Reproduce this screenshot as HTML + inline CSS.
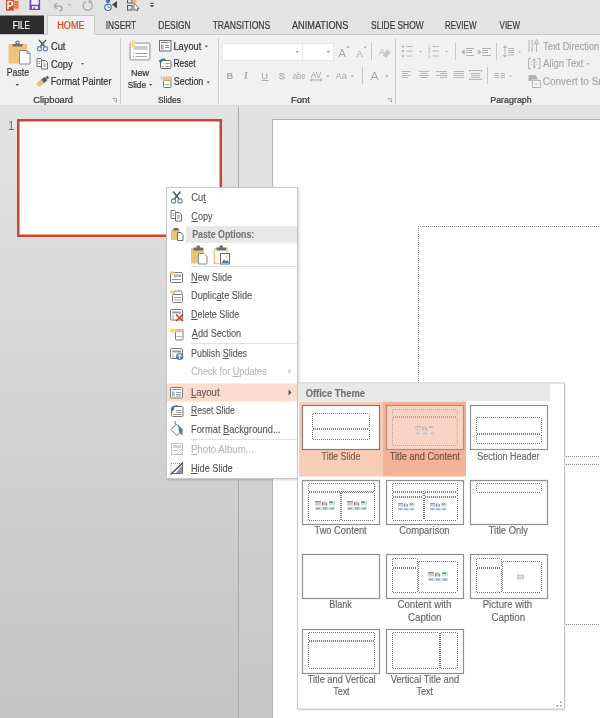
<!DOCTYPE html>
<html><head><meta charset="utf-8">
<style>
*{margin:0;padding:0}
html,body{width:600px;height:718px;overflow:hidden;background:#fff}
svg{position:absolute;left:0;top:0;font-family:"Liberation Sans",sans-serif;will-change:transform}
</style></head><body>
<svg width="600" height="718" viewBox="0 0 600 718">
<defs>
<linearGradient id="gl" x1="0" y1="0" x2="0" y2="1"><stop offset="0" stop-color="#e3e3e3"/><stop offset="1" stop-color="#c4c4c4"/></linearGradient>
<linearGradient id="gr" x1="0" y1="0" x2="0" y2="1"><stop offset="0" stop-color="#e3e3e3"/><stop offset="1" stop-color="#c6c6c6"/></linearGradient>
<filter id="sh" x="-10%" y="-10%" width="120%" height="120%"><feGaussianBlur stdDeviation="1.2"/></filter>
</defs>
<!-- top bar -->
<rect x="0" y="0" width="600" height="35" fill="#e3e3e3"/>
<rect x="0" y="34" width="600" height="1" fill="#c6c6c6"/>
<rect x="0" y="15.5" width="44" height="18.5" fill="#2d2d2d"/>
<path d="M47.5 35 V15.5 H94.5 V35" fill="#f1f1f1" stroke="#c6c6c6" stroke-width="1"/>
<!-- ribbon body -->
<rect x="0" y="35" width="600" height="70.5" fill="#f1f1f1"/>
<rect x="47.5" y="34" width="47" height="2" fill="#f1f1f1"/>
<rect x="0" y="105.5" width="600" height="1" fill="#c6c6c6"/>
<!-- group separators -->
<rect x="120" y="38" width="1" height="66" fill="#cfcfcf"/>
<rect x="218" y="38" width="1" height="66" fill="#cfcfcf"/>
<rect x="395" y="38" width="1" height="66" fill="#cfcfcf"/>
<!-- lower area -->
<rect x="0" y="106.5" width="238" height="611.5" fill="url(#gl)"/>
<rect x="238" y="106.5" width="1" height="611.5" fill="#ababab"/>
<rect x="239" y="106.5" width="361" height="611.5" fill="url(#gr)"/>
<!-- slide -->
<rect x="272.5" y="119.5" width="400" height="700" fill="#fff" stroke="#b4b4b4"/>
<path d="M418.5 226 V700" stroke="#8a8a8a" stroke-width="1" stroke-dasharray="1 1" fill="none"/>
<path d="M418 226.5 H600 M418 456.5 H600 M418 464.5 H600 M418 624.5 H600" stroke="#8a8a8a" stroke-width="1" stroke-dasharray="1 1" fill="none"/>
<!-- thumbnail -->
<rect x="18.25" y="120.25" width="202.5" height="115.5" fill="#fff" stroke="#c9472b" stroke-width="2.5"/>
<text x="7.8" y="129.6" font-size="12.2" fill="#c8563a">1</text>
<!-- context menu -->
<rect x="167" y="188" width="132" height="292" fill="#000" opacity=".18" filter="url(#sh)"/>
<rect x="166.5" y="187.5" width="131" height="291" fill="#fff" stroke="#c6c6c6"/>
<rect x="186" y="226" width="111" height="17" fill="#e8e8e8"/>
<rect x="191" y="266" width="106" height="1" fill="#e2e2e2"/>
<rect x="191" y="343" width="106" height="1" fill="#e2e2e2"/>
<rect x="191" y="439" width="106" height="1" fill="#e2e2e2"/>
<rect x="167" y="383.5" width="130" height="18" fill="#fcdccf"/>
<!-- submenu -->
<rect x="298" y="384" width="267" height="326" fill="#000" opacity=".18" filter="url(#sh)"/>
<rect x="297.5" y="383" width="267" height="326" fill="#fff" stroke="#c6c6c6"/>
<rect x="298" y="384" width="252" height="17" fill="#e8e8e8"/>
<rect x="299" y="401.5" width="83.5" height="75" fill="#f9ccb7"/>
<rect x="382.5" y="401.5" width="83.5" height="75" fill="#f4b397"/>
<rect x="302.5" y="405.5" width="77" height="44" fill="#fff" stroke="#857a76" stroke-width="1.2"/>
<path d="M313.0 413.5 H369.0" stroke="#7a7a7a" stroke-width="1" stroke-dasharray="1 1"/><path d="M313.0 428.5 H369.0" stroke="#7a7a7a" stroke-width="1" stroke-dasharray="1 1"/><path d="M312.5 414.0 V428.0" stroke="#7a7a7a" stroke-width="1" stroke-dasharray="1 1"/><path d="M369.5 414.0 V428.0" stroke="#7a7a7a" stroke-width="1" stroke-dasharray="1 1"/><path d="M313.0 429.5 H369.0" stroke="#7a7a7a" stroke-width="1" stroke-dasharray="1 1"/><path d="M313.0 439.5 H369.0" stroke="#7a7a7a" stroke-width="1" stroke-dasharray="1 1"/><path d="M312.5 430.0 V439.0" stroke="#7a7a7a" stroke-width="1" stroke-dasharray="1 1"/><path d="M369.5 430.0 V439.0" stroke="#7a7a7a" stroke-width="1" stroke-dasharray="1 1"/>
<rect x="386.5" y="405.5" width="77" height="44" fill="#f8d4c4" stroke="#b58a7a" stroke-width="1.2"/>
<path d="M393.0 409.5 H457.0" stroke="#c09a8c" stroke-width="1" stroke-dasharray="1 1"/><path d="M393.0 416.5 H457.0" stroke="#c09a8c" stroke-width="1" stroke-dasharray="1 1"/><path d="M392.5 410.0 V416.0" stroke="#c09a8c" stroke-width="1" stroke-dasharray="1 1"/><path d="M457.5 410.0 V416.0" stroke="#c09a8c" stroke-width="1" stroke-dasharray="1 1"/><path d="M393.0 417.5 H457.0" stroke="#c09a8c" stroke-width="1" stroke-dasharray="1 1"/><path d="M393.0 445.5 H457.0" stroke="#c09a8c" stroke-width="1" stroke-dasharray="1 1"/><path d="M392.5 418.0 V445.0" stroke="#c09a8c" stroke-width="1" stroke-dasharray="1 1"/><path d="M457.5 418.0 V445.0" stroke="#c09a8c" stroke-width="1" stroke-dasharray="1 1"/>
<g opacity=".5" style="filter:grayscale(1)"><g transform="translate(415.0 426.0) scale(1.00)"><rect x="0" y="0" width="6" height="4.5" fill="#c8cdd4"/><rect x="0" y="0" width="6" height="1.2" fill="#8e949c"/><rect x="7" y="1" width="1.6" height="3.5" fill="#6f8fc9"/><rect x="8.8" y="0" width="1.6" height="4.5" fill="#e6c65a"/><rect x="10.6" y="1.5" width="1.6" height="3" fill="#8a8a8a"/><rect x="14" y="0" width="6" height="4.5" fill="#cfe3d6"/><rect x="14" y="0.5" width="4" height="1.5" fill="#5aa07a"/><rect x="0" y="6" width="20" height="3" fill="#d6e2ee"/><rect x="1" y="6.5" width="4" height="2" fill="#8fb0d0"/><rect x="8" y="6.5" width="4" height="2" fill="#8fb0d0"/><rect x="15" y="6.5" width="4" height="2" fill="#8fb0d0"/></g></g>
<rect x="470.5" y="405.5" width="77" height="44" fill="#fff" stroke="#8d9096" stroke-width="1.2"/>
<path d="M477.0 417.5 H541.0" stroke="#7a7a7a" stroke-width="1" stroke-dasharray="1 1"/><path d="M477.0 433.5 H541.0" stroke="#7a7a7a" stroke-width="1" stroke-dasharray="1 1"/><path d="M476.5 418.0 V433.0" stroke="#7a7a7a" stroke-width="1" stroke-dasharray="1 1"/><path d="M541.5 418.0 V433.0" stroke="#7a7a7a" stroke-width="1" stroke-dasharray="1 1"/><path d="M477.0 434.5 H541.0" stroke="#7a7a7a" stroke-width="1" stroke-dasharray="1 1"/><path d="M477.0 443.5 H541.0" stroke="#7a7a7a" stroke-width="1" stroke-dasharray="1 1"/><path d="M476.5 435.0 V443.0" stroke="#7a7a7a" stroke-width="1" stroke-dasharray="1 1"/><path d="M541.5 435.0 V443.0" stroke="#7a7a7a" stroke-width="1" stroke-dasharray="1 1"/>
<rect x="302.5" y="480.5" width="77" height="44" fill="#fff" stroke="#8d9096" stroke-width="1.2"/>
<path d="M309.0 483.5 H374.0" stroke="#7a7a7a" stroke-width="1" stroke-dasharray="1 1"/><path d="M309.0 491.5 H374.0" stroke="#7a7a7a" stroke-width="1" stroke-dasharray="1 1"/><path d="M308.5 484.0 V491.0" stroke="#7a7a7a" stroke-width="1" stroke-dasharray="1 1"/><path d="M374.5 484.0 V491.0" stroke="#7a7a7a" stroke-width="1" stroke-dasharray="1 1"/><path d="M309.0 492.5 H340.0" stroke="#7a7a7a" stroke-width="1" stroke-dasharray="1 1"/><path d="M309.0 520.5 H340.0" stroke="#7a7a7a" stroke-width="1" stroke-dasharray="1 1"/><path d="M308.5 493.0 V520.0" stroke="#7a7a7a" stroke-width="1" stroke-dasharray="1 1"/><path d="M340.5 493.0 V520.0" stroke="#7a7a7a" stroke-width="1" stroke-dasharray="1 1"/><path d="M342.0 492.5 H374.0" stroke="#7a7a7a" stroke-width="1" stroke-dasharray="1 1"/><path d="M342.0 520.5 H374.0" stroke="#7a7a7a" stroke-width="1" stroke-dasharray="1 1"/><path d="M341.5 493.0 V520.0" stroke="#7a7a7a" stroke-width="1" stroke-dasharray="1 1"/><path d="M374.5 493.0 V520.0" stroke="#7a7a7a" stroke-width="1" stroke-dasharray="1 1"/>
<g transform="translate(315.0 501.0) scale(1.00)"><rect x="0" y="0" width="6" height="4.5" fill="#c8cdd4"/><rect x="0" y="0" width="6" height="1.2" fill="#8e949c"/><rect x="7" y="1" width="1.6" height="3.5" fill="#6f8fc9"/><rect x="8.8" y="0" width="1.6" height="4.5" fill="#e6c65a"/><rect x="10.6" y="1.5" width="1.6" height="3" fill="#8a8a8a"/><rect x="14" y="0" width="6" height="4.5" fill="#cfe3d6"/><rect x="14" y="0.5" width="4" height="1.5" fill="#5aa07a"/><rect x="0" y="6" width="20" height="3" fill="#d6e2ee"/><rect x="1" y="6.5" width="4" height="2" fill="#8fb0d0"/><rect x="8" y="6.5" width="4" height="2" fill="#8fb0d0"/><rect x="15" y="6.5" width="4" height="2" fill="#8fb0d0"/></g>
<g transform="translate(347.0 501.0) scale(1.00)"><rect x="0" y="0" width="6" height="4.5" fill="#c8cdd4"/><rect x="0" y="0" width="6" height="1.2" fill="#8e949c"/><rect x="7" y="1" width="1.6" height="3.5" fill="#6f8fc9"/><rect x="8.8" y="0" width="1.6" height="4.5" fill="#e6c65a"/><rect x="10.6" y="1.5" width="1.6" height="3" fill="#8a8a8a"/><rect x="14" y="0" width="6" height="4.5" fill="#cfe3d6"/><rect x="14" y="0.5" width="4" height="1.5" fill="#5aa07a"/><rect x="0" y="6" width="20" height="3" fill="#d6e2ee"/><rect x="1" y="6.5" width="4" height="2" fill="#8fb0d0"/><rect x="8" y="6.5" width="4" height="2" fill="#8fb0d0"/><rect x="15" y="6.5" width="4" height="2" fill="#8fb0d0"/></g>
<rect x="386.5" y="480.5" width="77" height="44" fill="#fff" stroke="#8d9096" stroke-width="1.2"/>
<path d="M393.0 483.5 H457.0" stroke="#7a7a7a" stroke-width="1" stroke-dasharray="1 1"/><path d="M393.0 491.5 H457.0" stroke="#7a7a7a" stroke-width="1" stroke-dasharray="1 1"/><path d="M392.5 484.0 V491.0" stroke="#7a7a7a" stroke-width="1" stroke-dasharray="1 1"/><path d="M457.5 484.0 V491.0" stroke="#7a7a7a" stroke-width="1" stroke-dasharray="1 1"/><path d="M393.0 492.5 H423.0" stroke="#7a7a7a" stroke-width="1" stroke-dasharray="1 1"/><path d="M393.0 496.5 H423.0" stroke="#7a7a7a" stroke-width="1" stroke-dasharray="1 1"/><path d="M392.5 493.0 V496.0" stroke="#7a7a7a" stroke-width="1" stroke-dasharray="1 1"/><path d="M423.5 493.0 V496.0" stroke="#7a7a7a" stroke-width="1" stroke-dasharray="1 1"/><path d="M425.0 492.5 H457.0" stroke="#7a7a7a" stroke-width="1" stroke-dasharray="1 1"/><path d="M425.0 496.5 H457.0" stroke="#7a7a7a" stroke-width="1" stroke-dasharray="1 1"/><path d="M424.5 493.0 V496.0" stroke="#7a7a7a" stroke-width="1" stroke-dasharray="1 1"/><path d="M457.5 493.0 V496.0" stroke="#7a7a7a" stroke-width="1" stroke-dasharray="1 1"/><path d="M393.0 497.5 H423.0" stroke="#7a7a7a" stroke-width="1" stroke-dasharray="1 1"/><path d="M393.0 520.5 H423.0" stroke="#7a7a7a" stroke-width="1" stroke-dasharray="1 1"/><path d="M392.5 498.0 V520.0" stroke="#7a7a7a" stroke-width="1" stroke-dasharray="1 1"/><path d="M423.5 498.0 V520.0" stroke="#7a7a7a" stroke-width="1" stroke-dasharray="1 1"/><path d="M425.0 497.5 H457.0" stroke="#7a7a7a" stroke-width="1" stroke-dasharray="1 1"/><path d="M425.0 520.5 H457.0" stroke="#7a7a7a" stroke-width="1" stroke-dasharray="1 1"/><path d="M424.5 498.0 V520.0" stroke="#7a7a7a" stroke-width="1" stroke-dasharray="1 1"/><path d="M457.5 498.0 V520.0" stroke="#7a7a7a" stroke-width="1" stroke-dasharray="1 1"/>
<g transform="translate(398.0 503.0) scale(0.82)"><rect x="0" y="0" width="6" height="4.5" fill="#c8cdd4"/><rect x="0" y="0" width="6" height="1.2" fill="#8e949c"/><rect x="7" y="1" width="1.6" height="3.5" fill="#6f8fc9"/><rect x="8.8" y="0" width="1.6" height="4.5" fill="#e6c65a"/><rect x="10.6" y="1.5" width="1.6" height="3" fill="#8a8a8a"/><rect x="14" y="0" width="6" height="4.5" fill="#cfe3d6"/><rect x="14" y="0.5" width="4" height="1.5" fill="#5aa07a"/><rect x="0" y="6" width="20" height="3" fill="#d6e2ee"/><rect x="1" y="6.5" width="4" height="2" fill="#8fb0d0"/><rect x="8" y="6.5" width="4" height="2" fill="#8fb0d0"/><rect x="15" y="6.5" width="4" height="2" fill="#8fb0d0"/></g>
<g transform="translate(430.0 503.0) scale(0.82)"><rect x="0" y="0" width="6" height="4.5" fill="#c8cdd4"/><rect x="0" y="0" width="6" height="1.2" fill="#8e949c"/><rect x="7" y="1" width="1.6" height="3.5" fill="#6f8fc9"/><rect x="8.8" y="0" width="1.6" height="4.5" fill="#e6c65a"/><rect x="10.6" y="1.5" width="1.6" height="3" fill="#8a8a8a"/><rect x="14" y="0" width="6" height="4.5" fill="#cfe3d6"/><rect x="14" y="0.5" width="4" height="1.5" fill="#5aa07a"/><rect x="0" y="6" width="20" height="3" fill="#d6e2ee"/><rect x="1" y="6.5" width="4" height="2" fill="#8fb0d0"/><rect x="8" y="6.5" width="4" height="2" fill="#8fb0d0"/><rect x="15" y="6.5" width="4" height="2" fill="#8fb0d0"/></g>
<rect x="470.5" y="480.5" width="77" height="44" fill="#fff" stroke="#8d9096" stroke-width="1.2"/>
<path d="M477.0 483.5 H541.0" stroke="#7a7a7a" stroke-width="1" stroke-dasharray="1 1"/><path d="M477.0 492.5 H541.0" stroke="#7a7a7a" stroke-width="1" stroke-dasharray="1 1"/><path d="M476.5 484.0 V492.0" stroke="#7a7a7a" stroke-width="1" stroke-dasharray="1 1"/><path d="M541.5 484.0 V492.0" stroke="#7a7a7a" stroke-width="1" stroke-dasharray="1 1"/>
<rect x="302.5" y="554.5" width="77" height="44" fill="#fff" stroke="#8d9096" stroke-width="1.2"/>
<rect x="386.5" y="554.5" width="77" height="44" fill="#fff" stroke="#8d9096" stroke-width="1.2"/>
<path d="M393.0 558.5 H417.0" stroke="#7a7a7a" stroke-width="1" stroke-dasharray="1 1"/><path d="M393.0 567.5 H417.0" stroke="#7a7a7a" stroke-width="1" stroke-dasharray="1 1"/><path d="M392.5 559.0 V567.0" stroke="#7a7a7a" stroke-width="1" stroke-dasharray="1 1"/><path d="M417.5 559.0 V567.0" stroke="#7a7a7a" stroke-width="1" stroke-dasharray="1 1"/><path d="M393.0 568.5 H417.0" stroke="#7a7a7a" stroke-width="1" stroke-dasharray="1 1"/><path d="M393.0 592.5 H417.0" stroke="#7a7a7a" stroke-width="1" stroke-dasharray="1 1"/><path d="M392.5 569.0 V592.0" stroke="#7a7a7a" stroke-width="1" stroke-dasharray="1 1"/><path d="M417.5 569.0 V592.0" stroke="#7a7a7a" stroke-width="1" stroke-dasharray="1 1"/><path d="M419.0 561.5 H457.0" stroke="#7a7a7a" stroke-width="1" stroke-dasharray="1 1"/><path d="M419.0 592.5 H457.0" stroke="#7a7a7a" stroke-width="1" stroke-dasharray="1 1"/><path d="M418.5 562.0 V592.0" stroke="#7a7a7a" stroke-width="1" stroke-dasharray="1 1"/><path d="M457.5 562.0 V592.0" stroke="#7a7a7a" stroke-width="1" stroke-dasharray="1 1"/>
<g transform="translate(428.0 572.0) scale(1.00)"><rect x="0" y="0" width="6" height="4.5" fill="#c8cdd4"/><rect x="0" y="0" width="6" height="1.2" fill="#8e949c"/><rect x="7" y="1" width="1.6" height="3.5" fill="#6f8fc9"/><rect x="8.8" y="0" width="1.6" height="4.5" fill="#e6c65a"/><rect x="10.6" y="1.5" width="1.6" height="3" fill="#8a8a8a"/><rect x="14" y="0" width="6" height="4.5" fill="#cfe3d6"/><rect x="14" y="0.5" width="4" height="1.5" fill="#5aa07a"/><rect x="0" y="6" width="20" height="3" fill="#d6e2ee"/><rect x="1" y="6.5" width="4" height="2" fill="#8fb0d0"/><rect x="8" y="6.5" width="4" height="2" fill="#8fb0d0"/><rect x="15" y="6.5" width="4" height="2" fill="#8fb0d0"/></g>
<rect x="470.5" y="554.5" width="77" height="44" fill="#fff" stroke="#8d9096" stroke-width="1.2"/>
<path d="M477.0 558.5 H501.0" stroke="#7a7a7a" stroke-width="1" stroke-dasharray="1 1"/><path d="M477.0 567.5 H501.0" stroke="#7a7a7a" stroke-width="1" stroke-dasharray="1 1"/><path d="M476.5 559.0 V567.0" stroke="#7a7a7a" stroke-width="1" stroke-dasharray="1 1"/><path d="M501.5 559.0 V567.0" stroke="#7a7a7a" stroke-width="1" stroke-dasharray="1 1"/><path d="M477.0 568.5 H501.0" stroke="#7a7a7a" stroke-width="1" stroke-dasharray="1 1"/><path d="M477.0 592.5 H501.0" stroke="#7a7a7a" stroke-width="1" stroke-dasharray="1 1"/><path d="M476.5 569.0 V592.0" stroke="#7a7a7a" stroke-width="1" stroke-dasharray="1 1"/><path d="M501.5 569.0 V592.0" stroke="#7a7a7a" stroke-width="1" stroke-dasharray="1 1"/><path d="M503.0 561.5 H541.0" stroke="#7a7a7a" stroke-width="1" stroke-dasharray="1 1"/><path d="M503.0 592.5 H541.0" stroke="#7a7a7a" stroke-width="1" stroke-dasharray="1 1"/><path d="M502.5 562.0 V592.0" stroke="#7a7a7a" stroke-width="1" stroke-dasharray="1 1"/><path d="M541.5 562.0 V592.0" stroke="#7a7a7a" stroke-width="1" stroke-dasharray="1 1"/>
<rect x="517.5" y="575.0" width="6" height="4" fill="#d4dde6" stroke="#a9b8c8" stroke-width=".7"/>
<rect x="302.5" y="629.5" width="77" height="44" fill="#fff" stroke="#8d9096" stroke-width="1.2"/>
<path d="M309.0 632.5 H374.0" stroke="#7a7a7a" stroke-width="1" stroke-dasharray="1 1"/><path d="M309.0 640.5 H374.0" stroke="#7a7a7a" stroke-width="1" stroke-dasharray="1 1"/><path d="M308.5 633.0 V640.0" stroke="#7a7a7a" stroke-width="1" stroke-dasharray="1 1"/><path d="M374.5 633.0 V640.0" stroke="#7a7a7a" stroke-width="1" stroke-dasharray="1 1"/><path d="M309.0 641.5 H374.0" stroke="#7a7a7a" stroke-width="1" stroke-dasharray="1 1"/><path d="M309.0 668.5 H374.0" stroke="#7a7a7a" stroke-width="1" stroke-dasharray="1 1"/><path d="M308.5 642.0 V668.0" stroke="#7a7a7a" stroke-width="1" stroke-dasharray="1 1"/><path d="M374.5 642.0 V668.0" stroke="#7a7a7a" stroke-width="1" stroke-dasharray="1 1"/>
<rect x="386.5" y="629.5" width="77" height="44" fill="#fff" stroke="#8d9096" stroke-width="1.2"/>
<path d="M393.0 632.5 H439.0" stroke="#7a7a7a" stroke-width="1" stroke-dasharray="1 1"/><path d="M393.0 668.5 H439.0" stroke="#7a7a7a" stroke-width="1" stroke-dasharray="1 1"/><path d="M392.5 633.0 V668.0" stroke="#7a7a7a" stroke-width="1" stroke-dasharray="1 1"/><path d="M439.5 633.0 V668.0" stroke="#7a7a7a" stroke-width="1" stroke-dasharray="1 1"/><path d="M441.0 632.5 H457.0" stroke="#7a7a7a" stroke-width="1" stroke-dasharray="1 1"/><path d="M441.0 668.5 H457.0" stroke="#7a7a7a" stroke-width="1" stroke-dasharray="1 1"/><path d="M440.5 633.0 V668.0" stroke="#7a7a7a" stroke-width="1" stroke-dasharray="1 1"/><path d="M457.5 633.0 V668.0" stroke="#7a7a7a" stroke-width="1" stroke-dasharray="1 1"/>
<rect x="560.0" y="701.5" width="1.5" height="1.5" fill="#8a8a8a"/>
<rect x="556.5" y="705.0" width="1.5" height="1.5" fill="#8a8a8a"/>
<rect x="560.0" y="705.0" width="1.5" height="1.5" fill="#8a8a8a"/>
<!-- QAT -->
<g>
<rect x="6" y="0" width="8" height="10.5" fill="#d24726"/>
<path d="M13.5 0.5 H19 V9.5 H13.5 Z" fill="#f0a184"/>
<path d="M14.5 2 H18 M14.5 4.5 H18 M14.5 7 H18" stroke="#d24726" stroke-width="1.2"/>
<path d="M8 9 V1.5 H10.5 Q12.3 1.5 12.3 3.6 Q12.3 5.7 10.5 5.7 H8" fill="none" stroke="#fff" stroke-width="1.5"/>
<rect x="29.5" y="-1" width="10.6" height="11" fill="#7a4ea8"/>
<rect x="31.3" y="-1" width="7.3" height="5.7" fill="#f6f0fb"/>
<rect x="32" y="6.2" width="6" height="2.6" fill="#f6f0fb"/>
<rect x="33.2" y="7.4" width="1.8" height="1.5" fill="#7a4ea8"/>
<path d="M54 6 L57 3 M54 6 L57 9 M54 6 H59 Q62 6 62 8.5 Q62 11 59.5 11" fill="none" stroke="#a8a8a8" stroke-width="1.4"/>
<path d="M67.5 4 H71.5 L69.5 6 Z" fill="#b8b8b8"/>
<path d="M90.5 2 A4.6 4.6 0 1 1 86 1.5" fill="none" stroke="#b0b0b0" stroke-width="1.5"/>
<path d="M89 -1 L92.5 2.5 L88.5 3.5 Z" fill="#b0b0b0"/>
<circle cx="108" cy="1" r="2" fill="#3e6db5"/>
<circle cx="108" cy="7.3" r="3.2" fill="#fff" stroke="#3e6db5" stroke-width="1.2"/>
<path d="M108 5.5 V7.5 H109.8" fill="none" stroke="#3e6db5" stroke-width=".9"/>
<path d="M112 4.5 L117 1 V8.5 Z" fill="#444"/>
<rect x="127.5" y="-1.5" width="4.5" height="4.5" fill="none" stroke="#555" stroke-width="1"/>
<rect x="127.5" y="5.5" width="4.5" height="4.5" fill="none" stroke="#555" stroke-width="1"/>
<rect x="133" y="0" width="3.5" height="3" fill="#f2b27a"/>
<path d="M134 3 V10.5 L135.8 9 L137 11 L138 10.5 L137 8.6 L139 8.5 Z" fill="#fff" stroke="#555" stroke-width=".8"/>
<path d="M150 3.3 H154" stroke="#555" stroke-width="1"/>
<path d="M149.8 5 H154.2 L152 7.5 Z" fill="#555"/>
</g>
<!-- Clipboard group -->
<g>
<rect x="8.5" y="44" width="18.5" height="19.5" rx="1" fill="#e8c57a"/>
<rect x="12.5" y="44" width="10" height="2.5" rx=".8" fill="#6d6d6d"/>
<circle cx="17.5" cy="42.6" r="1.6" fill="none" stroke="#6d6d6d" stroke-width="1.2"/>
<path d="M19.5 50.5 H27 L30 53.5 V64 H19.5 Z" fill="#fff" stroke="#8a8a8a" stroke-width="1"/>
<path d="M27 50.5 V53.5 H30" fill="none" stroke="#8a8a8a" stroke-width="1"/>
<path d="M15.5 84 H19 L17.25 86 Z" fill="#555"/>
<path d="M39 40 L45 47 M46 40 L40 47" stroke="#555" stroke-width="1.5"/>
<circle cx="39.5" cy="48.8" r="2.1" fill="none" stroke="#6a8bb0" stroke-width="1.2"/>
<circle cx="45.5" cy="48.8" r="2.1" fill="none" stroke="#6a8bb0" stroke-width="1.2"/>
<path d="M37 58.5 H40.5 L41.5 59.5 V66.5 H37 Z" fill="#fff" stroke="#6d6d6d" stroke-width="1"/>
<path d="M41.5 60.5 H45.5 L47.5 62.5 V69 H41.5 Z" fill="#fff" stroke="#6d6d6d" stroke-width="1"/>
<path d="M38.5 61.5 H40 M38.5 63.5 H40 M43 64 H46 M43 66 H46" stroke="#7a93b3" stroke-width="1"/>
<path d="M81 63 H84 L82.5 64.7 Z" fill="#555"/>
<g transform="rotate(-38 43 81)">
<path d="M36 79 L42.5 78.3 V83.7 L36 83 Z" fill="#e3c27a"/>
<rect x="42.5" y="78.8" width="4.5" height="4.4" fill="#5a5a5a"/>
<rect x="47.5" y="79.6" width="2.2" height="2.8" fill="#5a5a5a"/>
</g>
<path d="M112.5 98.5 H116.5 V102.5 M113.5 99.5 L116 102" fill="none" stroke="#a4a4a4" stroke-width="1"/>
</g>
<!-- Slides group -->
<g>
<rect x="130.1" y="43.1" width="19.8" height="16.8" rx="1.5" fill="#fff" stroke="#a4a4a4" stroke-width="1.3"/>
<rect x="133.5" y="46" width="14" height="4" fill="#cdcdcd"/>
<path d="M133 53.5 H134 M135.5 53.5 H147 M133 56.5 H134 M135.5 56.5 H147" stroke="#a8a8a8" stroke-width="1"/>
<circle cx="132.5" cy="43.5" r="2.3" fill="#f6d789"/>
<path d="M132.5 39.3 V47.7 M128.3 43.5 H136.7 M129.5 40.5 L135.5 46.5 M135.5 40.5 L129.5 46.5" stroke="#f6d789" stroke-width=".9"/>
<path d="M149 84 H152.5 L150.75 86 Z" fill="#555"/>
<rect x="159.5" y="40.5" width="11.5" height="10.5" fill="#fff" stroke="#6d6d6d" stroke-width="1"/>
<path d="M161 42.5 H169.5 M161.5 44.5 V49.5 M163 44.5 V49.5 M165 45.5 H169 M165 47.5 H169" stroke="#8a8a8a" stroke-width="1"/>
<path d="M204.5 45.5 H208 L206.25 47.5 Z" fill="#555"/>
<rect x="160.5" y="60.5" width="10.5" height="8" rx="1" fill="#fff" stroke="#6d6d6d" stroke-width="1"/>
<path d="M162 66.5 H164 M165.5 66.5 H169.5 M165.5 63.5 H169.5" stroke="#9a9a9a" stroke-width="1"/>
<path d="M160.5 61.5 Q161.5 58.5 165.5 59.5" fill="none" stroke="#3e6db5" stroke-width="1.5"/>
<path d="M158.5 60 L160.3 63.8 L162.8 60.8 Z" fill="#3e6db5"/>
<rect x="163.5" y="80.5" width="7.5" height="7" rx="1" fill="#fff" stroke="#6d6d6d" stroke-width="1"/>
<rect x="163.5" y="77" width="8" height="3.5" fill="#f4c0a0" stroke="#e8a07a" stroke-width=".6"/>
<path d="M161.5 75.5 V80 M159.3 77.75 H163.7" stroke="#f3cf75" stroke-width="1"/>
<path d="M165 84.5 H169.5" stroke="#b0b0b0" stroke-width="1"/>
<path d="M206.5 81.5 H210 L208.25 83.5 Z" fill="#555"/>
</g>
<!-- Font group (disabled) -->
<g>
<rect x="222.5" y="43.5" width="80" height="17" fill="#fff" stroke="#e8e8e8"/>
<rect x="302.5" y="43.5" width="31" height="17" fill="#fff" stroke="#e8e8e8"/>
<path d="M295.5 51 H299 L297.25 53 Z M326.5 51 H330 L328.25 53 Z" fill="#9a9a9a"/>
<text x="338.5" y="56.5" font-size="11" fill="#a8a8a8">A</text>
<path d="M346.5 48 L348 46 L349.5 48" fill="none" stroke="#a8a8a8" stroke-width="1"/>
<text x="356.5" y="56.8" font-size="9.5" fill="#a8a8a8">A</text>
<path d="M363.3 46.5 H366.7 L365 48.5 Z" fill="#a8a8a8"/>
<rect x="371" y="43" width="1" height="17" fill="#c8c8c8"/>
<text x="379" y="54.5" font-size="9" fill="#b0b0b0">A</text>
<path d="M382.5 55 L387.5 49.5 L391 52.5 L386 58 Z" fill="#c8c8c8"/>
<text x="226.6" y="78.7" font-size="9.3" font-weight="bold" fill="#a8a8a8">B</text>
<text x="244" y="78.7" font-size="9.3" font-style="italic" font-weight="bold" fill="#a8a8a8" font-family="Liberation Serif">I</text>
<text x="261.2" y="78.7" font-size="9.3" fill="#a8a8a8">U</text>
<rect x="261.5" y="80" width="7" height="1" fill="#a8a8a8"/>
<text x="279.5" y="80" font-size="9.3" fill="#d0d0d0">S</text>
<text x="278.6" y="79" font-size="9.3" fill="#a8a8a8">S</text>
<text x="292.8" y="78.6" font-size="8.5" fill="#a8a8a8" textLength="12.5" lengthAdjust="spacingAndGlyphs">abc</text>
<rect x="292.8" y="76" width="12.8" height="1" fill="#cacaca"/>
<text x="310.8" y="77.5" font-size="8.5" fill="#a8a8a8" textLength="10.5" lengthAdjust="spacingAndGlyphs">AV</text>
<path d="M310.5 80 H322 M312 78.5 L310.5 80 L312 81.5 M320.5 78.5 L322 80 L320.5 81.5" fill="none" stroke="#a8a8a8" stroke-width="1"/>
<path d="M326 75.5 H329.5 L327.75 77.5 Z M350.5 75.5 H354 L352.25 77.5 Z M385 75.5 H388.5 L386.75 77.5 Z" fill="#a8a8a8"/>
<text x="335.5" y="78.6" font-size="9.6" fill="#a8a8a8" textLength="11.5" lengthAdjust="spacingAndGlyphs">Aa</text>
<rect x="362" y="67" width="1" height="17" fill="#c8c8c8"/>
<text x="370.6" y="79.6" font-size="11.5" fill="#a8a8a8" textLength="8" lengthAdjust="spacingAndGlyphs">A</text>
<path d="M387.5 98.5 H391.5 V102.5 M388.5 99.5 L391 102" fill="none" stroke="#b0b0b0" stroke-width="1"/>
</g>
<!-- Paragraph group (disabled) -->
<g fill="none" stroke="#b4b4b4" stroke-width="1">
<path d="M406.5 46.5 H412.5 M406.5 51 H412.5 M406.5 56 H412.5"/>
<path d="M432.5 46.5 H439 M432.5 51 H439 M432.5 56 H439"/>
<path d="M466 48.5 H474 M466 50.5 H472 M466 52.5 H472 M466 55.5 H474 M463 52 H466"/>
<path d="M482 48.5 H491 M482 50.5 H488 M482 52.5 H488 M482 55.5 H491 M477 52 H480.5"/>
<path d="M508 48.5 H514 M508 50.5 H514 M508 52.5 H514 M508 55 H514"/>
<path d="M505 47 V56"/>
<path d="M402 71.5 H411 M402 73.5 H408 M402 75.5 H411 M402 77.5 H408"/>
<path d="M419 71.5 H429 M420.5 73.5 H427.5 M419 75.5 H429 M420.5 77.5 H427.5"/>
<path d="M436 71.5 H447 M440 73.5 H447 M436 75.5 H447 M440 77.5 H447"/>
<path d="M453.5 71.5 H464 M453.5 73.5 H464 M453.5 75.5 H464 M453.5 77.5 H464"/>
<path d="M471 73.5 H480 M471 75.5 H480 M471 77.5 H480 M469.5 70.5 H481.5 M469.5 79.5 H481.5 M469.5 70 V72 M481.5 70 V72 M469.5 78 V80 M481.5 78 V80"/>
<path d="M494.5 73.5 H499 M494.5 75.5 H499 M494.5 77.5 H499 M500.5 73.5 H505 M500.5 75.5 H505 M500.5 77.5 H505"/>
<path d="M529 40 V51 M532 40 V51 M536.5 44 V51"/>
<path d="M534 45 L536.5 39.5 L539 45 M535 43.3 H538"/>
<path d="M531 58.5 H528.5 V68.5 H531 M537.5 58.5 H540 V68.5 H537.5"/>
<path d="M534.2 59.5 V67.5"/>
<path d="M530.5 62 H538 M530.5 64.5 H538" stroke="#d8b8c8" stroke-dasharray="1 1"/>
<rect x="532.5" y="80.5" width="8" height="7" fill="#f4f4f4"/>
<path d="M534.5 84 H538.5" stroke="#d8b8c8"/>
</g>
<g fill="#b4b4b4">
<circle cx="403" cy="46.5" r="1.2"/><circle cx="403" cy="51" r="1.2"/><circle cx="403" cy="56" r="1.2"/>
<text x="428" y="48.5" font-size="4.5">1</text><text x="428" y="53" font-size="4.5">2</text><text x="428" y="58" font-size="4.5">3</text>
<path d="M419 51 H422 L420.5 52.8 Z M445 51 H448 L446.5 52.8 Z M518 51.5 H521 L519.5 53.3 Z M509 75.5 H512 L510.5 77.3 Z M586.5 63 H590 L588.25 65 Z"/>
<path d="M461 52 L464.5 49.3 V54.7 Z M481.5 52 L478.5 49.3 V54.7 Z"/>
<path d="M505 45 L507.3 48 H502.7 Z M505 58 L507.3 55 H502.7 Z"/>
<path d="M528 50 L529 52 L530 50 Z M531 50 L532 52 L533 50 Z M535.5 50 L536.5 52 L537.5 50 Z"/>
<path d="M534.2 58 L536 60.5 H532.4 Z M534.2 69 L536 66.5 H532.4 Z"/>
<path d="M528.5 75 H535.5 L538.5 79.5 H532 V81 H528.5 Z"/>
</g>
<rect x="455" y="43" width="1" height="17" fill="#c8c8c8"/>
<rect x="496" y="43" width="1" height="17" fill="#c8c8c8"/>
<rect x="487" y="67" width="1" height="17" fill="#c8c8c8"/>
<!-- context menu icons -->
<g>
<path d="M173 191.5 L179.5 199.5 M180.5 191.5 L174 199.5" stroke="#555" stroke-width="1.5"/>
<circle cx="173.5" cy="201" r="2.1" fill="none" stroke="#6a8bb0" stroke-width="1.2"/>
<circle cx="180" cy="201" r="2.1" fill="none" stroke="#6a8bb0" stroke-width="1.2"/>
<path d="M171 210.5 H174.5 L175.5 211.5 V218.5 H171 Z" fill="#fff" stroke="#6d6d6d" stroke-width="1"/>
<path d="M175.5 212.5 H179.5 L181.5 214.5 V221 H175.5 Z" fill="#fff" stroke="#6d6d6d" stroke-width="1"/>
<path d="M172.5 213.5 H174 M172.5 215.5 H174 M177 216 H180 M177 218 H180" stroke="#7a93b3" stroke-width="1"/>
<!-- small paste -->
<rect x="171" y="229.5" width="8.5" height="10.5" fill="#e8c57a"/>
<rect x="173.5" y="228" width="5" height="2.5" fill="#6d6d6d"/>
<path d="M177.5 232.5 H181 L183 234.5 V240.5 H177.5 Z" fill="#fff" stroke="#6d6d6d" stroke-width="1"/>
<!-- paste option 1 -->
<rect x="191" y="248" width="13" height="15.5" rx=".5" fill="#e8c57a"/>
<rect x="193.5" y="247.5" width="9.5" height="3" fill="#6d6d6d"/>
<rect x="196.5" y="245.5" width="3.5" height="2.5" rx="1" fill="#6d6d6d"/>
<path d="M198.5 253.5 H204 L207 256.5 V264 H198.5 Z" fill="#fff" stroke="#8a8a8a" stroke-width="1"/>
<!-- paste option 2 -->
<path d="M214.5 248.5 H227 V252 M214.5 248.5 V263.5 H219.5" fill="none" stroke="#e8c57a" stroke-width="1.5"/>
<rect x="216.5" y="247.5" width="9.5" height="3" fill="#6d6d6d"/>
<rect x="219.5" y="245.5" width="3.5" height="2.5" rx="1" fill="#6d6d6d"/>
<rect x="220.5" y="253.5" width="9" height="10.5" fill="#fff" stroke="#6d6d6d" stroke-width="1"/>
<path d="M221.5 263 L224 259.5 L226 261.5 L227.5 260 L229 263 Z" fill="#3e78b5"/>
<rect x="225.5" y="256" width="1.5" height="1.5" fill="#e8c57a"/>
<!-- new slide -->
<rect x="170.5" y="272.5" width="12" height="10" rx="1" fill="#fff" stroke="#7a7a7a" stroke-width="1"/>
<rect x="174" y="274.5" width="7" height="2.5" fill="#b0b0b0"/>
<path d="M172 279.5 H181" stroke="#9a9a9a" stroke-width="1"/>
<path d="M172.5 270.5 V275.5 M170.0 273.0 H175.0 M170.7 271.2 L174.3 274.8 M174.3 271.2 L170.7 274.8" stroke="#f3d58a" stroke-width=".9"/><circle cx="172.5" cy="273.0" r="1.1" fill="#f0c860"/>
<!-- duplicate -->
<rect x="174" y="291" width="8" height="6" rx="1" fill="#fff" stroke="#7a7a7a" stroke-width="1"/>
<rect x="172.5" y="294.5" width="10" height="8" rx="1" fill="#fff" stroke="#7a7a7a" stroke-width="1"/>
<path d="M174.5 297.5 H181 M174.5 300 H181" stroke="#9a9a9a" stroke-width="1"/>
<path d="M172.0 289.5 V294.5 M169.5 292.0 H174.5 M170.2 290.2 L173.8 293.8 M173.8 290.2 L170.2 293.8" stroke="#f3d58a" stroke-width=".9"/><circle cx="172.0" cy="292.0" r="1.1" fill="#f0c860"/>
<!-- delete -->
<rect x="170.5" y="309.5" width="12" height="10.5" rx="1" fill="#fff" stroke="#7a7a7a" stroke-width="1"/>
<rect x="172" y="311.5" width="9" height="2" fill="#9a9a9a"/>
<path d="M172 316 H174 M172 318 H174" stroke="#9a9a9a" stroke-width="1"/>
<path d="M176 314.5 L183 321 M183 314.5 L176 321" stroke="#d23a2a" stroke-width="1.7"/>
<!-- add section -->
<rect x="175.5" y="329.5" width="7.5" height="10.5" rx="1" fill="#fff" stroke="#7a7a7a" stroke-width="1"/>
<rect x="175" y="329" width="8.5" height="3.2" fill="#f2b48a"/>
<path d="M176.5 336.5 H182" stroke="#b0b0b0" stroke-width="1"/>
<path d="M172.5 328.0 V333.0 M170.0 330.5 H175.0 M170.7 328.7 L174.3 332.3 M174.3 328.7 L170.7 332.3" stroke="#f3d58a" stroke-width=".9"/><circle cx="172.5" cy="330.5" r="1.1" fill="#f0c860"/>
<!-- publish -->
<rect x="170.5" y="348.5" width="12" height="10" rx="1" fill="#fff" stroke="#7a7a7a" stroke-width="1"/>
<rect x="172" y="350.5" width="9" height="2" fill="#9a9a9a"/>
<path d="M172 355 H174 M172 357 H174" stroke="#9a9a9a" stroke-width="1"/>
<circle cx="179.7" cy="356.5" r="3.6" fill="#3e78b5"/>
<path d="M179.7 359 V354.5 M177.8 356.3 L179.7 354.3 L181.6 356.3" fill="none" stroke="#fff" stroke-width="1.1"/>
<path d="M288.5 368.5 V374 L291.2 371.25 Z" fill="#c8c8c8"/>
<!-- layout -->
<rect x="170.5" y="387.5" width="12" height="10.5" rx="1" fill="#fff" stroke="#7a7a7a" stroke-width="1"/>
<path d="M172 389.5 H181 M172.5 391.5 V396.5 M174 391.5 V396.5 M176 392.5 H181 M176 394.5 H181 M176 396 H181" stroke="#9a9a9a" stroke-width="1"/>
<path d="M288.5 389.5 V395.5 L291.5 392.5 Z" fill="#555"/>
<!-- reset slide -->
<rect x="171.5" y="406.5" width="11.5" height="10" rx="1" fill="#fff" stroke="#7a7a7a" stroke-width="1"/>
<path d="M176 410.5 H181.5 M176 412.5 H181.5 M173 414.5 H181.5" stroke="#9a9a9a" stroke-width="1"/>
<path d="M172.5 410 Q172.5 405.5 178 406" fill="none" stroke="#3e6db5" stroke-width="1.6"/>
<path d="M170.5 408.5 L172.5 411.5 L174.5 408.5 Z" fill="#3e6db5"/>
<!-- format background -->
<path d="M171 429.5 L176.5 424 L182.5 430 L177 435.5 Z" fill="#fff" stroke="#6d6d6d" stroke-width="1"/>
<path d="M178 425 L182.5 429.5 L182.5 436 L179 432 Z" fill="#5b7ab5"/>
<path d="M175.5 424.5 Q174 421 176 422" fill="none" stroke="#6d6d6d" stroke-width="1"/>
<!-- photo album (disabled) -->
<rect x="171.5" y="443.5" width="11" height="11" fill="#fff" stroke="#c4c4c4" stroke-width="1"/>
<rect x="173" y="445" width="8" height="3" fill="#d4d4d4"/>
<path d="M173 450.5 H178 M176 455 L182 449" stroke="#c4c4c4" stroke-width="1"/>
<!-- hide slide -->
<path d="M171 463.5 H182 M171 463.5 V473.5" stroke="#9a9a9a" stroke-width="1" stroke-dasharray="1 1"/>
<path d="M182.5 463 V473.5 H171.5 Z" fill="#fff" stroke="#6d6d6d" stroke-width="1"/>
<path d="M182 465.5 V473 H176 Z" fill="#8b90cf"/>
<path d="M170.5 474.5 L183 462.5" stroke="#444" stroke-width="1.1"/>
</g>

<g>
<text x="12.86" y="29.00" font-size="11.19" fill="#fff" stroke="#fff" stroke-width="0.22" textLength="16.94" lengthAdjust="spacingAndGlyphs">FILE</text>
<text x="57.27" y="29.00" font-size="11.67" fill="#d24726" stroke="#d24726" stroke-width="0.22" textLength="27.37" lengthAdjust="spacingAndGlyphs">HOME</text>
<text x="105.75" y="29.00" font-size="11.67" fill="#3a3a3a" stroke="#3a3a3a" stroke-width="0.22" textLength="30.42" lengthAdjust="spacingAndGlyphs">INSERT</text>
<text x="158.33" y="29.00" font-size="11.67" fill="#3a3a3a" stroke="#3a3a3a" stroke-width="0.22" textLength="32.28" lengthAdjust="spacingAndGlyphs">DESIGN</text>
<text x="212.63" y="29.00" font-size="11.67" fill="#3a3a3a" stroke="#3a3a3a" stroke-width="0.22" textLength="57.59" lengthAdjust="spacingAndGlyphs">TRANSITIONS</text>
<text x="292.00" y="29.00" font-size="11.67" fill="#3a3a3a" stroke="#3a3a3a" stroke-width="0.22" textLength="56.34" lengthAdjust="spacingAndGlyphs">ANIMATIONS</text>
<text x="371.07" y="29.00" font-size="11.67" fill="#3a3a3a" stroke="#3a3a3a" stroke-width="0.22" textLength="52.48" lengthAdjust="spacingAndGlyphs">SLIDE SHOW</text>
<text x="444.96" y="29.00" font-size="11.67" fill="#3a3a3a" stroke="#3a3a3a" stroke-width="0.22" textLength="31.49" lengthAdjust="spacingAndGlyphs">REVIEW</text>
<text x="499.60" y="29.00" font-size="11.67" fill="#3a3a3a" stroke="#3a3a3a" stroke-width="0.22" textLength="20.35" lengthAdjust="spacingAndGlyphs">VIEW</text>
<text x="6.81" y="76.00" font-size="10.55" fill="#363636" stroke="#363636" stroke-width="0.22" textLength="22.21" lengthAdjust="spacingAndGlyphs">Paste</text>
<text x="50.93" y="50.00" font-size="10.07" fill="#363636" stroke="#363636" stroke-width="0.22" textLength="14.55" lengthAdjust="spacingAndGlyphs">Cut</text>
<text x="50.93" y="68.00" font-size="10.71" fill="#363636" stroke="#363636" stroke-width="0.22" textLength="21.77" lengthAdjust="spacingAndGlyphs">Copy</text>
<text x="50.66" y="85.00" font-size="10.39" fill="#363636" stroke="#363636" stroke-width="0.22" textLength="60.86" lengthAdjust="spacingAndGlyphs">Format Painter</text>
<text x="33.24" y="103.00" font-size="9.27" fill="#363636" stroke="#363636" stroke-width="0.22" textLength="39.79" lengthAdjust="spacingAndGlyphs">Clipboard</text>
<text x="130.97" y="76.00" font-size="8.79" fill="#363636" stroke="#363636" stroke-width="0.22" textLength="18.15" lengthAdjust="spacingAndGlyphs">New</text>
<text x="127.67" y="88.00" font-size="9.75" fill="#363636" stroke="#363636" stroke-width="0.22" textLength="18.43" lengthAdjust="spacingAndGlyphs">Slide</text>
<text x="173.46" y="50.00" font-size="10.71" fill="#363636" stroke="#363636" stroke-width="0.22" textLength="27.82" lengthAdjust="spacingAndGlyphs">Layout</text>
<text x="173.53" y="67.00" font-size="10.23" fill="#363636" stroke="#363636" stroke-width="0.22" textLength="21.95" lengthAdjust="spacingAndGlyphs">Reset</text>
<text x="173.85" y="85.00" font-size="10.07" fill="#363636" stroke="#363636" stroke-width="0.22" textLength="29.45" lengthAdjust="spacingAndGlyphs">Section</text>
<text x="157.96" y="103.00" font-size="9.27" fill="#363636" stroke="#363636" stroke-width="0.22" textLength="23.09" lengthAdjust="spacingAndGlyphs">Slides</text>
<text x="290.94" y="103.00" font-size="8.79" fill="#363636" stroke="#363636" stroke-width="0.22" textLength="19.04" lengthAdjust="spacingAndGlyphs">Font</text>
<text x="490.29" y="103.00" font-size="9.27" fill="#363636" stroke="#363636" stroke-width="0.22" textLength="41.41" lengthAdjust="spacingAndGlyphs">Paragraph</text>
<text x="543.11" y="50.00" font-size="11.35" fill="#a8a8a8" stroke="#a8a8a8" stroke-width="0.22" textLength="56.11" lengthAdjust="spacingAndGlyphs">Text Direction</text>
<text x="543.30" y="67.00" font-size="11.83" fill="#a8a8a8" stroke="#a8a8a8" stroke-width="0.22" textLength="39.98" lengthAdjust="spacingAndGlyphs">Align Text</text>
<text x="542.80" y="85.00" font-size="11.19" fill="#a8a8a8" stroke="#a8a8a8" stroke-width="0.22" textLength="63.83" lengthAdjust="spacingAndGlyphs">Convert to Sm</text>
<text x="191.33" y="201.00" font-size="10.60" fill="#535353" stroke="#535353" stroke-width="0.1" textLength="14.65" lengthAdjust="spacingAndGlyphs">Cut</text>
<rect x="203.36" y="202.00" width="2.62" height="1" fill="#535353"/>
<text x="191.34" y="220.00" font-size="10.60" fill="#535353" stroke="#535353" stroke-width="0.1" textLength="21.36" lengthAdjust="spacingAndGlyphs">Copy</text>
<rect x="191.34" y="221.00" width="6.61" height="1" fill="#535353"/>
<text x="192.17" y="238.00" font-size="10.60" fill="#737373" stroke="#737373" stroke-width="0.1" font-weight="bold" textLength="62.15" lengthAdjust="spacingAndGlyphs">Paste Options:</text>
<text x="191.07" y="281.00" font-size="10.60" fill="#535353" stroke="#535353" stroke-width="0.1" textLength="41.06" lengthAdjust="spacingAndGlyphs">New Slide</text>
<rect x="191.07" y="282.00" width="6.59" height="1" fill="#535353"/>
<text x="191.07" y="299.00" font-size="10.60" fill="#535353" stroke="#535353" stroke-width="0.1" textLength="61.06" lengthAdjust="spacingAndGlyphs">Duplicate Slide</text>
<rect x="216.51" y="300.00" width="5.09" height="1" fill="#535353"/>
<text x="191.09" y="318.00" font-size="10.60" fill="#535353" stroke="#535353" stroke-width="0.1" textLength="48.03" lengthAdjust="spacingAndGlyphs">Delete Slide</text>
<rect x="191.09" y="319.00" width="6.43" height="1" fill="#535353"/>
<text x="191.80" y="337.00" font-size="10.60" fill="#535353" stroke="#535353" stroke-width="0.1" textLength="49.41" lengthAdjust="spacingAndGlyphs">Add Section</text>
<rect x="191.80" y="338.00" width="6.11" height="1" fill="#535353"/>
<text x="190.99" y="357.00" font-size="10.60" fill="#535353" stroke="#535353" stroke-width="0.1" textLength="56.08" lengthAdjust="spacingAndGlyphs">Publish Slides</text>
<rect x="222.75" y="358.00" width="5.96" height="1" fill="#535353"/>
<text x="191.24" y="375.00" font-size="10.60" fill="#b6b6b6" stroke="#b6b6b6" stroke-width="0.1" textLength="75.53" lengthAdjust="spacingAndGlyphs">Check for Updates</text>
<rect x="232.81" y="376.00" width="6.59" height="1" fill="#b6b6b6"/>
<text x="190.94" y="396.00" font-size="10.60" fill="#535353" stroke="#535353" stroke-width="0.1" textLength="28.64" lengthAdjust="spacingAndGlyphs">Layout</text>
<rect x="190.94" y="397.00" width="5.31" height="1" fill="#535353"/>
<text x="191.01" y="414.00" font-size="10.60" fill="#535353" stroke="#535353" stroke-width="0.1" textLength="43.90" lengthAdjust="spacingAndGlyphs">Reset Slide</text>
<rect x="191.01" y="415.00" width="6.20" height="1" fill="#535353"/>
<text x="190.95" y="433.00" font-size="10.60" fill="#535353" stroke="#535353" stroke-width="0.1" textLength="89.77" lengthAdjust="spacingAndGlyphs">Format Background...</text>
<rect x="223.11" y="434.00" width="6.23" height="1" fill="#535353"/>
<text x="190.93" y="453.00" font-size="10.60" fill="#b6b6b6" stroke="#b6b6b6" stroke-width="0.1" textLength="62.91" lengthAdjust="spacingAndGlyphs">Photo Album...</text>
<rect x="190.93" y="454.00" width="6.40" height="1" fill="#b6b6b6"/>
<text x="190.97" y="472.00" font-size="10.60" fill="#535353" stroke="#535353" stroke-width="0.1" textLength="41.66" lengthAdjust="spacingAndGlyphs">Hide Slide</text>
<rect x="190.97" y="473.00" width="6.60" height="1" fill="#535353"/>
<text x="305.63" y="397.00" font-size="10.71" fill="#737373" stroke="#737373" stroke-width="0.15" font-weight="bold" textLength="59.32" lengthAdjust="spacingAndGlyphs">Office Theme</text>
<text x="321.52" y="460.00" font-size="10.39" fill="#7a5a50" stroke="#7a5a50" stroke-width="0.15" textLength="39.00" lengthAdjust="spacingAndGlyphs">Title Slide</text>
<text x="389.71" y="460.00" font-size="10.39" fill="#6e5048" stroke="#6e5048" stroke-width="0.15" textLength="70.17" lengthAdjust="spacingAndGlyphs">Title and Content</text>
<text x="477.34" y="460.00" font-size="10.39" fill="#666" stroke="#666" stroke-width="0.15" textLength="62.18" lengthAdjust="spacingAndGlyphs">Section Header</text>
<text x="314.51" y="534.00" font-size="10.39" fill="#666" stroke="#666" stroke-width="0.15" textLength="52.17" lengthAdjust="spacingAndGlyphs">Two Content</text>
<text x="399.23" y="534.00" font-size="10.39" fill="#666" stroke="#666" stroke-width="0.15" textLength="50.29" lengthAdjust="spacingAndGlyphs">Comparison</text>
<text x="488.71" y="534.00" font-size="10.39" fill="#666" stroke="#666" stroke-width="0.15" textLength="39.19" lengthAdjust="spacingAndGlyphs">Title Only</text>
<text x="329.17" y="608.00" font-size="10.39" fill="#666" stroke="#666" stroke-width="0.15" textLength="22.74" lengthAdjust="spacingAndGlyphs">Blank</text>
<text x="397.41" y="608.00" font-size="10.55" fill="#666" stroke="#666" stroke-width="0.15" textLength="54.03" lengthAdjust="spacingAndGlyphs">Content with</text>
<text x="407.91" y="621.00" font-size="10.39" fill="#666" stroke="#666" stroke-width="0.15" textLength="33.64" lengthAdjust="spacingAndGlyphs">Caption</text>
<text x="482.74" y="608.00" font-size="10.55" fill="#666" stroke="#666" stroke-width="0.15" textLength="49.40" lengthAdjust="spacingAndGlyphs">Picture with</text>
<text x="491.51" y="621.00" font-size="10.39" fill="#666" stroke="#666" stroke-width="0.15" textLength="33.64" lengthAdjust="spacingAndGlyphs">Caption</text>
<text x="307.72" y="683.00" font-size="11.35" fill="#666" stroke="#666" stroke-width="0.15" textLength="67.86" lengthAdjust="spacingAndGlyphs">Title and Vertical</text>
<text x="333.22" y="695.00" font-size="11.35" fill="#666" stroke="#666" stroke-width="0.15" textLength="16.36" lengthAdjust="spacingAndGlyphs">Text</text>
<text x="390.70" y="683.00" font-size="11.35" fill="#666" stroke="#666" stroke-width="0.15" textLength="68.42" lengthAdjust="spacingAndGlyphs">Vertical Title and</text>
<text x="416.52" y="695.00" font-size="11.35" fill="#666" stroke="#666" stroke-width="0.15" textLength="16.56" lengthAdjust="spacingAndGlyphs">Text</text>
</g>
</svg>
</body></html>
